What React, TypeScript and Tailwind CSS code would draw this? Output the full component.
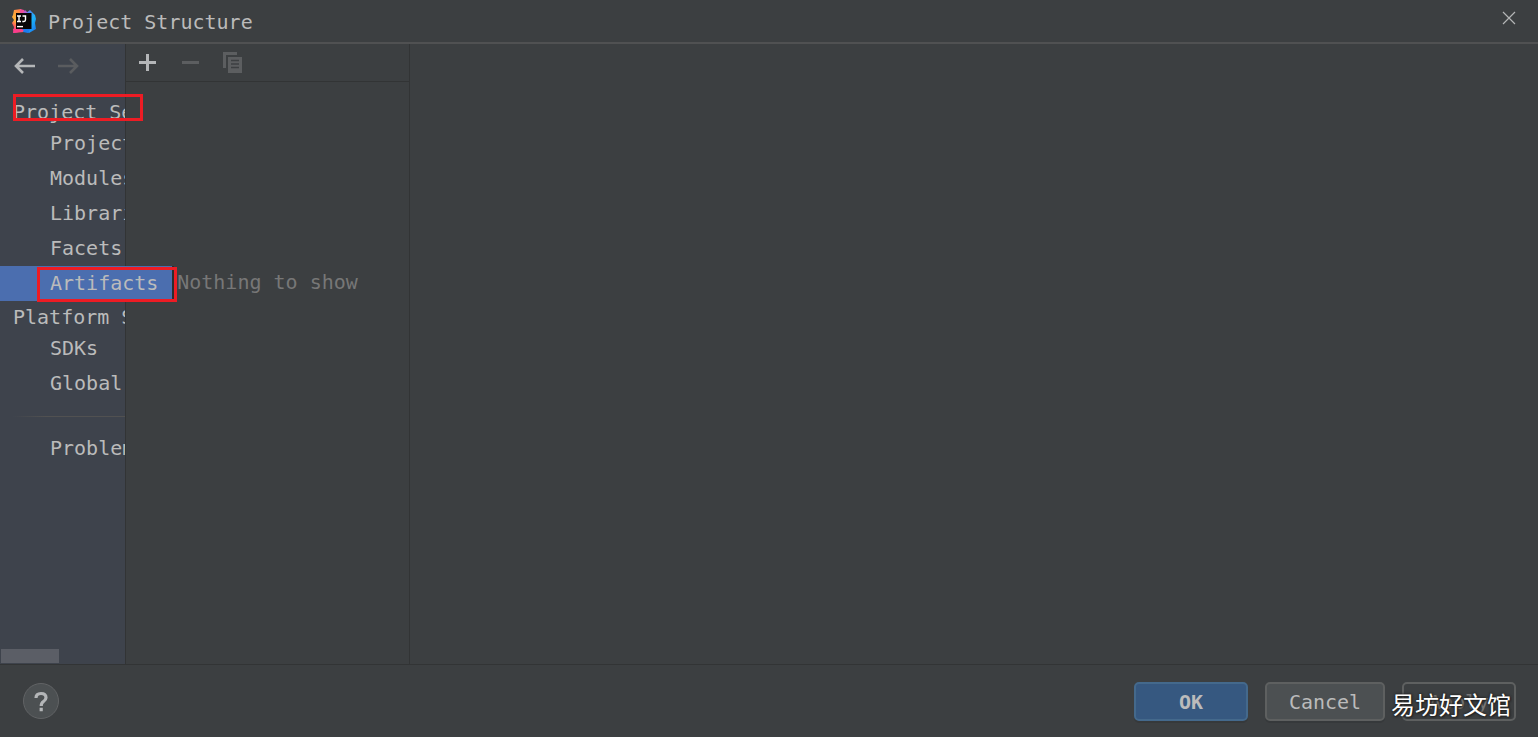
import React from "react";

function Logo() {
  return (
    <svg width="26" height="26" viewBox="0 0 26 26" aria-hidden="true" className="shrink-0">
      <defs>
        <linearGradient id="warm" x1="0.6" y1="0" x2="0.2" y2="1">
          <stop offset="0" stopColor="#ff7a4a" />
          <stop offset="0.3" stopColor="#ffa63a" />
          <stop offset="0.55" stopColor="#ffb03c" />
          <stop offset="0.75" stopColor="#ff5a5c" />
          <stop offset="1" stopColor="#fb3d9a" />
        </linearGradient>
        <linearGradient id="cool" x1="0" y1="0" x2="0.8" y2="1">
          <stop offset="0" stopColor="#b06ae0" />
          <stop offset="0.35" stopColor="#3f8df5" />
          <stop offset="0.6" stopColor="#1cb4f7" />
          <stop offset="1" stopColor="#1a7df0" />
        </linearGradient>
      </defs>
      <path d="M3 2l7-1 3 8-4 8 4 7-11 1 1-6-2-4 2-3-2-3 1-2z" fill="url(#warm)" />
      <path d="M9 1l4 1 2 4-6 1z" fill="#ee4f9a" />
      <path d="M12 5l2-3 3 3-2 3z" fill="#b85ad0" />
      <path d="M14 6l5-4 5 5 1 4-1 4 1 6-7 4-6-4z" fill="url(#cool)" />
      <path d="M11 20l9 0-3 5-5-1z" fill="#1a7df0" />
      <path d="M2 21l8-1 3 3-10 2z" fill="#fb3d8a" />
      <rect x="5" y="5" width="15.500" height="16" fill="#080506" />
      <path d="M6 8h4M6 13.500h4M8 8v5.500M11.500 8h3v3.800q0 1.700-1.600 1.700h-1.600" fill="none" stroke="#fff" strokeWidth="1.4" />
      <path d="M6 18.600h6" stroke="#fff" strokeWidth="1.4" />
    </svg>
  );
}

function Arrow({ back }: { back?: boolean }) {
  return (
    <svg width="22" height="16" viewBox="0 0 22 16" fill="none" stroke="currentColor" strokeWidth="2.6" aria-hidden="true">
      {back ? <path d="M21 8H2M9 1L2 8l7 7" /> : <path d="M1 8h19M13 1l7 7-7 7" />}
    </svg>
  );
}

function Item({ label, selected }: { label: string; selected?: boolean }) {
  return (
    <li className="h-[35px]">
      {selected ? (
        <a
          href="#artifacts"
          aria-current="page"
          className="relative z-10 flex h-full w-[174px] items-center whitespace-nowrap border-r-2 border-[#2b2d2f] bg-[#4b6eaf] pb-0.5 pl-[50px]"
        >
          {label}
        </a>
      ) : (
        <a href={"#" + label.toLowerCase()} className="flex h-full items-center overflow-hidden whitespace-nowrap pb-0.5 pl-[50px]">
          {label}
        </a>
      )}
    </li>
  );
}

function Heading({ children }: { children: string }) {
  return <h2 className="h-[30px] overflow-hidden whitespace-nowrap pl-[13px] leading-8">{children}</h2>;
}

export default function App() {
  return (
    <div className="relative flex min-h-screen flex-col bg-[#3c3f41] font-['DejaVu_Sans_Mono',monospace] text-[20px] leading-6 text-[#bbbbbb]">
      <header className="flex h-11 items-center border-b-2 border-[#505152] pl-[11px] pr-[22px]">
        <Logo />
        <h1 className="ml-[11px] flex-1 pt-0.5">Project Structure</h1>
        <button aria-label="Close" className="mb-1.5">
          <svg width="14" height="14" viewBox="0 0 14 14" stroke="#b4b5b6" strokeWidth="1.2" aria-hidden="true">
            <path d="M1 1l12 12M13 1L1 13" />
          </svg>
        </button>
      </header>

      <main className="flex flex-1">
        <nav aria-label="Settings" className="flex w-[126px] shrink-0 flex-col border-r border-[#323435] bg-[#3e434c]">
          <div className="flex h-[52px] items-start gap-[21px] pl-3.5 pt-3.5">
            <button aria-label="Back" className="text-[#b4b6b8]"><Arrow back /></button>
            <button aria-label="Forward" disabled className="text-[#5a5c5f]"><Arrow /></button>
          </div>
          <Heading>Project Settings</Heading>
          <ul>
            <Item label="Project" />
            <Item label="Modules" />
            <Item label="Libraries" />
            <Item label="Facets" />
            <Item label="Artifacts" selected />
          </ul>
          <Heading>Platform Settings</Heading>
          <ul>
            <Item label="SDKs" />
            <Item label="Global Libraries" />
          </ul>
          <div className="mb-3.5 ml-3 mt-[15px] h-px bg-linear-to-r from-transparent to-[#515151] to-30%" />
          <ul>
            <Item label="Problems" />
          </ul>
          <div className="mb-px ml-px mt-auto h-3.5 w-[58px] bg-[#5b5e66]" />
        </nav>

        <section aria-label="Artifacts" className="flex w-[284px] shrink-0 flex-col border-r border-[#323435]">
          <div className="flex h-[38px] items-center gap-[25px] border-b border-[#323435] pb-0.5 pl-[13px]">
            <button aria-label="Add">
              <svg width="18" height="18" viewBox="0 0 18 18" stroke="#b4b6b8" strokeWidth="3" aria-hidden="true">
                <path d="M0 9.500h17M8.500 1v17" />
              </svg>
            </button>
            <button aria-label="Remove" disabled>
              <svg width="18" height="18" viewBox="0 0 18 18" stroke="#5c5e60" strokeWidth="3" aria-hidden="true">
                <path d="M0 9.500h17" />
              </svg>
            </button>
            <button aria-label="Copy" disabled className="-ml-0.5">
              <svg width="20" height="22" viewBox="0 0 20 22" aria-hidden="true">
                <path d="M0 1h14v3H3v13H0z" fill="#5c5e60" />
                <path d="M5 6h14v16H5z" fill="#5c5e60" />
                <path d="M8 9.500h8M8 13h8M8 16.500h8" stroke="#3c3f41" strokeWidth="1.3" />
              </svg>
            </button>
          </div>
          <p className="pt-[188px] text-center text-[#777777]">Nothing to show</p>
        </section>

        <section aria-label="Details" className="flex-1" />
      </main>

      <footer className="flex h-[73px] items-center justify-between border-t border-[#323435] pl-[23px] pr-[22px]">
        <button aria-label="Help" className="flex size-9 items-center justify-center rounded-full border border-[#616365] bg-[#4c5052]">
          <svg width="16" height="22" viewBox="0 0 16 22" fill="none" stroke="#b4b6b8" strokeWidth="3.2" aria-hidden="true">
            <path d="M3 8Q3 3.500 8 3.500T13 7.800Q13 9.800 10.500 11.500Q8.200 13 8.200 16M8.200 17.800v3.400" />
          </svg>
        </button>
        <div className="flex gap-[17px]">
          <button className="h-[39px] w-[114px] rounded-[5px] border-2 border-[#44698c] bg-[#365880] pt-0.5 font-bold shadow-[0_2px_0_#36393b]">OK</button>
          <button className="h-[39px] w-[120px] rounded-[5px] border-2 border-[#5e6060] bg-[#4c5052] pt-0.5 shadow-[0_2px_0_#36393b]">Cancel</button>
          <button disabled className="h-[39px] w-[114px] rounded-[5px] border-2 border-[#5e6060] pt-0.5 text-[#777777]">Apply</button>
        </div>
      </footer>

      <div className="pointer-events-none absolute left-[13px] top-[94px] z-20 h-[27px] w-[130px] border-3 border-[#ed1c24]" />
      <div className="pointer-events-none absolute left-[37px] top-[267px] z-20 h-[35px] w-[140px] border-3 border-[#ed1c24]" />
      <span className="pointer-events-none absolute bottom-[15px] right-[27px] z-20 font-['Noto_Sans_CJK_SC',sans-serif] text-[24px] leading-9 text-white [text-shadow:0_0_2px_#222,0_0_3px_#222,1px_1px_2px_#222]">
        易坊好文馆
      </span>
    </div>
  );
}
